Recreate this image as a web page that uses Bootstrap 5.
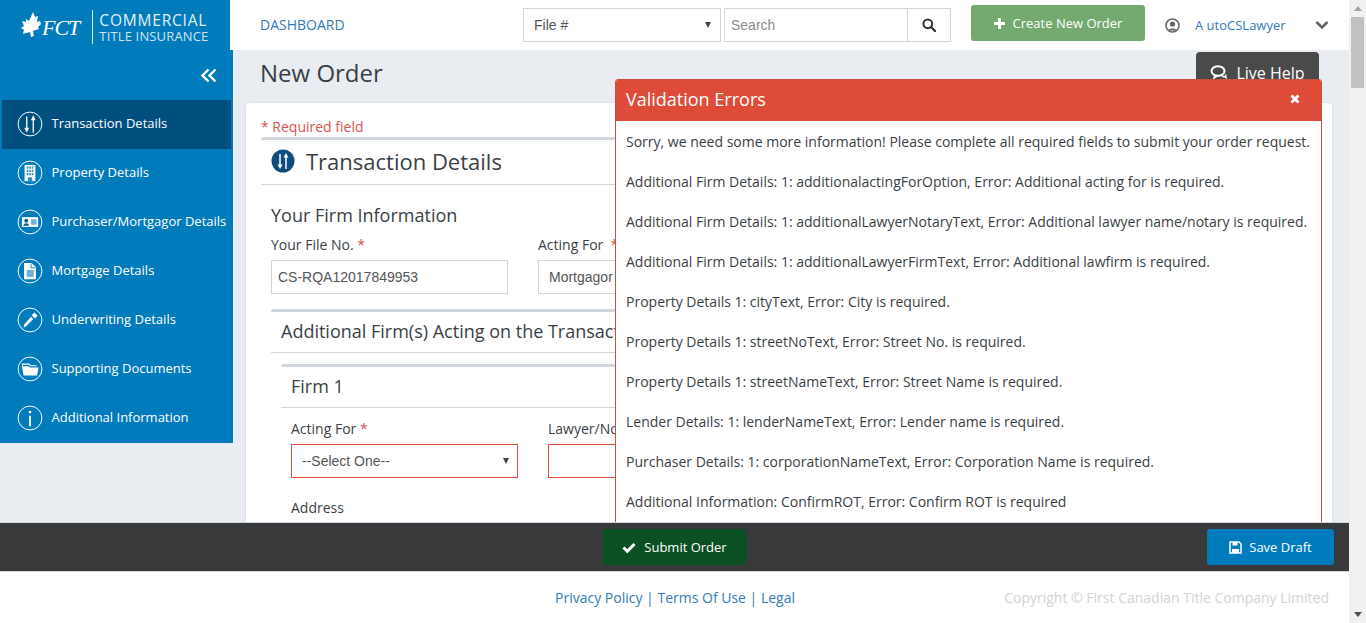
<!DOCTYPE html>
<html lang="en">
<head>
  <meta charset="UTF-8">
  <title>New Order</title>
  <link rel="stylesheet" href="https://cdn.jsdelivr.net/npm/bootstrap@5.3.2/dist/css/bootstrap.min.css">
  <style>
    html, body { height: 100%; overflow: hidden; }
    body { font-family: "Open Sans", sans-serif; font-size: 14px; color: #3a3f45; background: #e9edf2; }
    a { text-decoration: none; }
    .app-shell { height: 623px; }
    .app-main { width: 1349px; }
    /* scrollbar */
    .fake-scroll { width: 17px; background: #f1f1f1; }
    .fake-scroll .thumb { height: 71px; background: #c1c1c1; margin: 0 2px; }
    .fake-scroll .arrow-box { height: 17px; }
    .tri-up { width: 0; height: 0; border: 4px solid transparent; border-top: 0; border-bottom: 5px solid #a3a3a3; }
    .tri-down { width: 0; height: 0; border: 4px solid transparent; border-bottom: 0; border-top: 5px solid #505050; }
    /* top bar */
    .top-bar { height: 50px; background: #fff; flex: none; }
    .brand-box { width: 230px; background: #007bbb; color: #fff; padding-left: 21px; }
    .fct-word { font-family: "Liberation Serif", serif; font-style: italic; font-size: 22px; letter-spacing: -1px; margin: 4px 0 0 1px; }
    .brand-rule { width: 1px; height: 34px; background: #cfe6f3; margin: 4px 6px 0 13px; }
    .brand-lines { line-height: 1; padding-top: 6px; white-space: nowrap; }
    .brand-top { font-size: 15.5px; letter-spacing: .8px; color: #e4f1f9; }
    .brand-sub { font-size: 13px; letter-spacing: .15px; color: #cfe5f2; margin-top: 2px; }
    .dash-link { color: #337ab7; font-size: 14px; margin: -2px 0 0 30px; width: 263px; }
    .top-field { height: 34px; border: 1px solid #d0d5de; border-radius: 0; font-family: "Liberation Sans", sans-serif; font-size: 14px; color: #555; box-shadow: none; }
    .file-select { width: 198px; margin-right: 3px; padding: 0 10px; background-position: right 9px center; }
    .form-select.tri-select { background-image: url("data:image/svg+xml,%3Csvg xmlns='http://www.w3.org/2000/svg' width='8' height='7'%3E%3Cpath d='M0 0h8L4 7z' fill='%23444'/%3E%3C/svg%3E"); background-size: 6px 6px; }
    .search-input { width: 183px; padding: 0 6px; border-right: 0; }
    .search-input::placeholder { color: #8b8b8b; }
    .search-btn { width: 44px; height: 34px; border: 1px solid #d0d5de; background: #fff; border-radius: 0; padding: 0; }
    .new-order-btn { width: 174px; height: 36px; margin: 0 20px 0 20px; background: #74aa70; border: 0; border-radius: 3px; color: #fff; font-size: 13px; position: relative; top: -2px; padding: 1px 0 0; }
    .user-link { color: #337ab7; font-size: 13px; margin: 1px 0 0 15px; width: 120px; }
    /* sidebar */
    .side-bar { width: 233px; flex: none; height: 393px; background: #007bbb; }
    .side-toggle { height: 50px; padding: 18px 16px 0 0; }
    .side-item { height: 49px; padding: 0 0 2px 15px; margin: 0 2px; width: 229px; color: #fff; font-size: 13px; gap: 8.5px; white-space: nowrap; }
    .side-item:hover { color: #fff; }
    .side-item.is-active { background: #00507f; }
    .side-item svg { flex: none; }
    /* content */
    .body-row { flex: 1 1 auto; min-height: 0; overflow: hidden; position: relative; }
    .content-col { flex: 1 1 auto; min-width: 0; padding-left: 13px; padding-right: 16px; margin-left: -1px; }
    .page-title { font-size: 24px; font-weight: 400; margin: 0 0 13px 15px; line-height: 33px; padding-top: 6px; box-sizing: content-box; color: #3a3f45; height: 33px; }
    .live-help { position: absolute; left: 1196px; top: 2px; width: 123px; height: 50px; background: #4a4a4a; color: #fff; border-radius: 4px; font-size: 16px; padding-top: 9px; gap: 8px; }
    .main-sheet { background: #fff; border: 1px solid #dfe3e9; border-radius: 4px; padding: 14px 15px 0; height: 600px; }
    .req-note { color: #d9534f; font-size: 14px; line-height: 20px; }
    .panel-box { border: 0; border-top: 3px solid #d0d5de; border-radius: 3px 3px 0 0; background: #fff; }
    .panel-box .card-header { background: #fff; border-bottom: 1px solid #d0d5de; border-radius: 0; }
    .head-main { height: 45px; padding: 0 0 2px 10px; font-size: 22px; gap: 11px; color: #3a3f45; }
    .panel-inner { padding: 0 10px; }
    .sub-head { font-size: 18px; font-weight: 400; line-height: 25px; margin: 18px 0 7px; color: #3a3f45; }
    .f-label { font-size: 14px; line-height: 20px; margin-bottom: 5px; display: block; color: #3a3f45; }
    .req-star { color: #d9534f; }
    .form-col { width: 237px; flex: none; }
    .firm-body .form-col { width: 227px; }
    .form-pair { gap: 30px; }
    .flat-field { height: 34px; border: 1px solid #d0d5de; border-radius: 0; font-family: "Liberation Sans", sans-serif; font-size: 14px; color: #555; padding: 0 6px; box-shadow: none; }
    .flat-field.has-error { border-color: #e04c3a; }
    .form-col .form-select { padding-left: 10px; background-position: right 8px center; }
    .panel-add { margin-top: 15px; }
    .head-add { height: 41px; padding: 0 0 2px 10px; font-size: 18px; white-space: nowrap; color: #3a3f45; }
    .panel-firm { margin: 11px 0 0 0; }
    .head-firm { height: 41px; padding: 0 0 2px 10px; font-size: 18px; color: #3a3f45; }
    .firm-body { padding: 11px 10px 0; }
    .addr-label { margin-top: 20px; }
    /* action + footer */
    .action-bar { height: 50px; flex: none; background: #38393b; border-top: 1px solid #d0d5de; border-bottom: 1px solid #d0d5de; position: relative; z-index: 3; padding-right: 15px; }
    .submit-btn { width: 143px; height: 36px; background: #0b5023; color: #fff; border: 0; border-radius: 3px; font-size: 13px; gap: 8px; margin-left: 603px; padding: 1px 0 0; }
    .draft-btn { width: 127px; height: 36px; background: #007bbb; color: #fff; border: 0; border-radius: 3px; font-size: 13px; gap: 7px; margin-left: auto; padding: 1px 0 0; }
    .foot-bar { height: 51px; flex: none; background: #fff; position: relative; z-index: 3; padding-right: 20px; }
    .foot-links { margin-left: 555px; color: #337ab7; font-size: 14px; }
    .foot-links a { color: #337ab7; }
    .foot-copy { margin-left: auto; color: #d4d4d4; font-size: 14px; }
    /* validation popup */
    .err-pop { position: absolute; left: 615px; top: 79px; width: 707px; height: 444px; border: 1px solid #c9503f; border-radius: 3px 3px 0 0; background: #fff; z-index: 2; overflow: hidden; }
    .err-pop .card-header { flex: none; height: 41px; background: #de4c39; color: #fff; border: 0; border-radius: 0; padding: 0 21px 3px 10px; font-size: 18px; }
    .err-pop .card-body { padding: 11px 10px 0; }
    .err-pop p { margin: 0 0 20px; line-height: 20px; font-size: 14px; color: #3a3f45; white-space: nowrap; }
  </style>
</head>
<body>
<div class="app-shell d-flex position-relative">
  <div class="app-main d-flex flex-column">

    <!-- top bar -->
    <div class="top-bar d-flex align-items-center">
      <div class="brand-box d-flex align-items-center h-100">
        <svg width="20" height="26" viewBox="0 0 20 26"><path d="M12 0l2 5 3-1-1 6 3-1 1 3-3 3 1 2-6 2 1 5-3 1-1-5-7 2 1-4-3-2 3-2-2-5 4 1 0-3 3 2z" fill="#fff"/></svg>
        <span class="fct-word">FCT</span>
        <span class="brand-rule"></span>
        <div class="brand-lines">
          <div class="brand-top">COMMERCIAL</div>
          <div class="brand-sub">TITLE INSURANCE</div>
        </div>
      </div>
      <a href="#" class="dash-link">DASHBOARD</a>
      <select class="form-select tri-select top-field file-select"><option>File #</option></select>
      <input type="text" class="form-control top-field search-input" placeholder="Search">
      <button class="btn search-btn d-flex align-items-center justify-content-center">
        <svg width="14" height="14" viewBox="0 0 14 14"><circle cx="5.8" cy="5.8" r="4.4" fill="none" stroke="#333" stroke-width="2"/><path d="M9 9l4 4" stroke="#333" stroke-width="2.4" stroke-linecap="round"/></svg>
      </button>
      <button class="btn new-order-btn d-flex align-items-center justify-content-center gap-2">
        <svg width="11" height="11" viewBox="0 0 11 11"><path d="M4 0h3v4h4v3H7v4H4V7H0V4h4z" fill="#fff"/></svg>
        Create New Order
      </button>
      <svg width="15" height="15" viewBox="0 0 15 15"><circle cx="7.5" cy="7.5" r="6.5" fill="none" stroke="#666" stroke-width="1.6"/><circle cx="7.5" cy="6" r="2.6" fill="#666"/><path d="M3.2 12.5c.8-2.6 7.8-2.6 8.6 0" fill="#666"/></svg>
      <a href="#" class="user-link">A utoCSLawyer</a>
      <svg width="14" height="10" viewBox="0 0 14 10"><path d="M1.5 2l5.5 5.5L12.500 2" fill="none" stroke="#666" stroke-width="2.6"/></svg>
    </div>

    <!-- sidebar and form -->
    <div class="body-row d-flex">
      <div class="side-bar">
        <div class="side-toggle d-flex justify-content-end">
          <svg width="16" height="15" viewBox="0 0 16 15"><path d="M7.500 1.500L1.500 7.500l6 6M14.500 1.500l-6 6 6 6" fill="none" stroke="#fff" stroke-width="2.400"/></svg>
        </div>
        <a href="#" class="side-item is-active d-flex align-items-center">
          <svg width="26" height="26" viewBox="0 0 24 24"><circle cx="12" cy="12" r="11" fill="none" stroke="#fff" stroke-width=".9"/><path d="M9 5v12M15 7v13" stroke="#fff" stroke-width="1.200"/><path d="M6.800 15.500h4.400L9 20zM12.800 8.500h4.400L15 4z" fill="#fff"/></svg>
          Transaction Details
        </a>
        <a href="#" class="side-item d-flex align-items-center">
          <svg width="26" height="26" viewBox="0 0 24 24"><circle cx="12" cy="12" r="11" fill="none" stroke="#fff" stroke-width=".9"/><path d="M7 4.500h10v15H7z" fill="#fff"/><path d="M9 7h1.500M11.300 7h1.500M13.600 7h1.500M9 10h1.500M11.300 10h1.500M13.600 10h1.500M9 13h1.500M11.300 13h1.500M13.600 13h1.500" stroke="#2f90c6" stroke-width="2"/><path d="M10 16h4v3.500h-4z" fill="#2f90c6"/></svg>
          Property Details
        </a>
        <a href="#" class="side-item d-flex align-items-center">
          <svg width="26" height="26" viewBox="0 0 24 24"><circle cx="12" cy="12" r="11" fill="none" stroke="#fff" stroke-width=".9"/><path d="M4.500 7.500h15v9h-15z" fill="#fff"/><circle cx="8.500" cy="10.800" r="1.800" fill="#00609a"/><path d="M5.800 15.500c.2-3.200 5.200-3.200 5.400 0z" fill="#00609a"/><path d="M13 9.500h5v5h-5z" fill="#6db2da"/></svg>
          Purchaser/Mortgagor Details
        </a>
        <a href="#" class="side-item d-flex align-items-center">
          <svg width="26" height="26" viewBox="0 0 24 24"><circle cx="12" cy="12" r="11" fill="none" stroke="#fff" stroke-width=".9"/><path d="M6.500 4.500h7l4 4v11h-11z" fill="#fff"/><path d="M9 11h6.500v6.500H9z" fill="#6db2da"/><path d="M13 5v4h4" fill="none" stroke="#2f90c6"/></svg>
          Mortgage Details
        </a>
        <a href="#" class="side-item d-flex align-items-center">
          <svg width="26" height="26" viewBox="0 0 24 24"><circle cx="12" cy="12" r="11" fill="none" stroke="#fff" stroke-width=".9"/><path d="M6 19l.8-3 6.200-7 2 2-6.500 6.800z" fill="#fff"/><path d="M13.500 7.500l2.500-2.500 3 3-2.500 2.500z" fill="#fff"/></svg>
          Underwriting Details
        </a>
        <a href="#" class="side-item d-flex align-items-center">
          <svg width="26" height="26" viewBox="0 0 24 24"><circle cx="12" cy="12" r="11" fill="none" stroke="#fff" stroke-width=".9"/><path d="M4.500 9.500h6l1.500 1h8l-1.500 7.500H6z" fill="#fff"/><path d="M5 9V7.500h6L12.500 9H18" fill="none" stroke="#fff"/></svg>
          Supporting Documents
        </a>
        <a href="#" class="side-item d-flex align-items-center">
          <svg width="26" height="26" viewBox="0 0 24 24"><circle cx="12" cy="12" r="11" fill="none" stroke="#fff" stroke-width=".9"/><circle cx="12" cy="6.500" r="1.300" fill="#fff"/><path d="M12 10v9.500" stroke="#fff" stroke-width="1.600"/></svg>
          Additional Information
        </a>
      </div>

      <div class="content-col">
        <h1 class="page-title">New Order</h1>
        <div class="main-sheet">
          <div class="req-note">* Required field</div>
          <div class="card panel-box">
            <div class="card-header head-main d-flex align-items-center">
              <svg width="24" height="24" viewBox="0 0 24 24"><circle cx="12" cy="12" r="11.500" fill="#0d4c7d"/><path d="M9 5v12M15 7v13" stroke="#fff" stroke-width="1.500"/><path d="M6.500 15.500h5L9 20zM12.500 8.500h5L15 4z" fill="#fff"/></svg>
              Transaction Details
            </div>
            <div class="panel-inner">
              <h2 class="sub-head">Your Firm Information</h2>
              <div class="d-flex form-pair">
                <div class="form-col">
                  <label class="f-label">Your File No. <span class="req-star">*</span></label>
                  <input type="text" class="form-control flat-field" value="CS-RQA12017849953">
                </div>
                <div class="form-col">
                  <label class="f-label">Acting For &nbsp;<span class="req-star">*</span></label>
                  <select class="form-select tri-select flat-field"><option>Mortgagor</option></select>
                </div>
              </div>
              <div class="card panel-box panel-add">
                <div class="card-header head-add d-flex align-items-center">Additional Firm(s) Acting on the Transaction</div>
                <div class="panel-inner">
                  <div class="card panel-box panel-firm">
                    <div class="card-header head-firm d-flex align-items-center">Firm 1</div>
                    <div class="firm-body">
                      <div class="d-flex form-pair">
                        <div class="form-col">
                          <label class="f-label">Acting For <span class="req-star">*</span></label>
                          <select class="form-select tri-select flat-field has-error"><option>--Select One--</option></select>
                        </div>
                        <div class="form-col">
                          <label class="f-label">Lawyer/Notary <span class="req-star">*</span></label>
                          <input type="text" class="form-control flat-field has-error">
                        </div>
                      </div>
                      <label class="f-label addr-label">Address</label>
                    </div>
                  </div>
                </div>
              </div>
            </div>
          </div>
        </div>
      </div>

      <div class="live-help d-flex justify-content-center align-items-start">
        <svg class="mt-1" width="18" height="15" viewBox="0 0 18 15"><ellipse cx="8" cy="6" rx="6.500" ry="4.800" fill="none" stroke="#fff" stroke-width="2"/><path d="M5 10l-1 3 4-2.500M12 11c2 .8 3 1 4 1.500l-.5-3" fill="none" stroke="#fff" stroke-width="1.600"/></svg>
        Live Help
      </div>
    </div>

    <!-- actions -->
    <div class="action-bar d-flex align-items-center">
      <button class="btn submit-btn d-flex align-items-center justify-content-center">
        <svg width="14" height="11" viewBox="0 0 14 11"><path d="M1.500 5.500l3.800 3.800L12.500 2" fill="none" stroke="#fff" stroke-width="3"/></svg>
        Submit Order
      </button>
      <button class="btn draft-btn d-flex align-items-center justify-content-center">
        <svg width="13" height="13" viewBox="0 0 13 13"><path d="M1 1h9l2 2v9H1z" fill="none" stroke="#fff" stroke-width="1.500"/><path d="M3.500 1h5v3.500h-5zM3 8h7v4H3z" fill="#fff"/></svg>
        Save Draft
      </button>
    </div>
    <div class="foot-bar d-flex align-items-center">
      <div class="foot-links"><a href="#">Privacy Policy</a> | <a href="#">Terms Of Use</a> | <a href="#">Legal</a></div>
      <div class="foot-copy">Copyright © First Canadian Title Company Limited</div>
    </div>
  </div>

  <!-- window scrollbar -->
  <div class="fake-scroll d-flex flex-column">
    <div class="arrow-box d-flex align-items-center justify-content-center"><span class="tri-up"></span></div>
    <div class="thumb"></div>
    <div class="flex-grow-1"></div>
    <div class="arrow-box d-flex align-items-center justify-content-center"><span class="tri-down"></span></div>
  </div>

  <!-- validation errors -->
  <div class="card err-pop">
    <div class="card-header d-flex align-items-center justify-content-between">
      <span>Validation Errors</span>
      <svg width="10" height="10" viewBox="0 0 10 10"><path d="M1.500 1.500l7 7M8.500 1.500l-7 7" stroke="#fff" stroke-width="2.800"/></svg>
    </div>
    <div class="card-body">
      <p>Sorry, we need some more information! Please complete all required fields to submit your order request.</p>
      <p>Additional Firm Details: 1: additionalactingForOption, Error: Additional acting for is required.</p>
      <p>Additional Firm Details: 1: additionalLawyerNotaryText, Error: Additional lawyer name/notary is required.</p>
      <p>Additional Firm Details: 1: additionalLawyerFirmText, Error: Additional lawfirm is required.</p>
      <p>Property Details 1: cityText, Error: City is required.</p>
      <p>Property Details 1: streetNoText, Error: Street No. is required.</p>
      <p>Property Details 1: streetNameText, Error: Street Name is required.</p>
      <p>Lender Details: 1: lenderNameText, Error: Lender name is required.</p>
      <p>Purchaser Details: 1: corporationNameText, Error: Corporation Name is required.</p>
      <p>Additional Information: ConfirmROT, Error: Confirm ROT is required</p>
    </div>
  </div>
</div>
<script src="https://cdn.jsdelivr.net/npm/bootstrap@5.3.2/dist/js/bootstrap.bundle.min.js"></script>
</body>
</html>
